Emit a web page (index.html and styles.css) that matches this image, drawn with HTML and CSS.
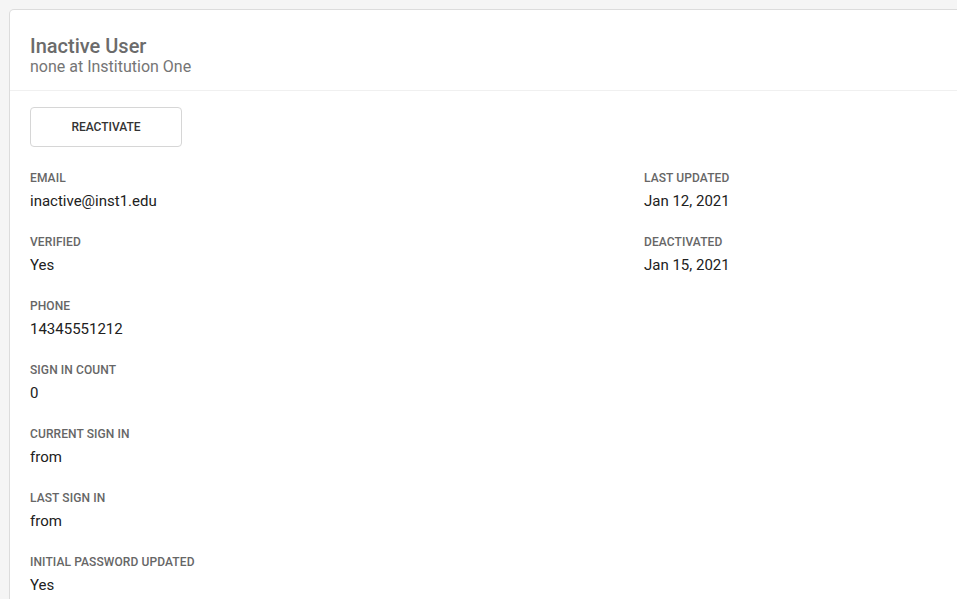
FILE: index.html
```html
<!DOCTYPE html>
<html>
<head>
<meta charset="utf-8">
<link rel="stylesheet" href="styles.css">
</head>
<body>
<div class="card">
  <div class="card-header">
    <div class="title">Inactive User</div>
    <div class="subtitle">none at Institution One</div>
  </div>
  <div class="card-body">
    <button class="btn">REACTIVATE</button>
    <div class="fields">
      <div class="col">
        <div class="field"><div class="label">Email</div><div class="value">inactive@inst1.edu</div></div>
        <div class="field"><div class="label">Verified</div><div class="value">Yes</div></div>
        <div class="field"><div class="label">Phone</div><div class="value">14345551212</div></div>
        <div class="field"><div class="label">Sign in count</div><div class="value">0</div></div>
        <div class="field"><div class="label">Current sign in</div><div class="value">from</div></div>
        <div class="field"><div class="label">Last sign in</div><div class="value">from</div></div>
        <div class="field"><div class="label">Initial password updated</div><div class="value">Yes</div></div>
      </div>
      <div class="col">
        <div class="field"><div class="label">Last updated</div><div class="value">Jan 12, 2021</div></div>
        <div class="field"><div class="label">Deactivated</div><div class="value">Jan 15, 2021</div></div>
      </div>
    </div>
  </div>
</div>
</body>
</html>
```
FILE: styles.css
```css
html, body {
  margin: 0;
  padding: 0;
  background: #f5f5f5;
  overflow: hidden;
  font-family: Roboto, "Liberation Sans", sans-serif;
}
body {
  padding: 10px;
  width: 1300px;
}
.card {
  background: #fff;
  border-radius: 4px;
  box-shadow: 0 0 0 1px #dcdcdc;
  min-height: 700px;
}
.card-header {
  padding: 25px 20px 13px;
  border-bottom: 1px solid #f0f0f0;
}
.title {
  font-size: 20px;
  line-height: 22px;
  font-weight: 500;
  color: #6b6b6b;
}
.subtitle {
  font-size: 16px;
  line-height: 20px;
  color: #757575;
}
.card-body {
  padding: 16px 20px;
}
.btn {
  display: block;
  width: 152px;
  height: 40px;
  background: #fff;
  border: 1px solid #d6d6d6;
  border-radius: 4px;
  font-family: Roboto, "Liberation Sans", sans-serif;
  font-size: 12px;
  font-weight: 500;
  color: #333;
  padding: 0;
}
.fields {
  display: grid;
  grid-template-columns: 614px 1fr;
  margin-top: 23px;
}
.field {
  margin-bottom: 23px;
}
.label {
  font-size: 12px;
  line-height: 16px;
  font-weight: 500;
  text-transform: uppercase;
  letter-spacing: 0.1px;
  color: #666;
  margin-bottom: 5px;
}
.value {
  font-size: 15px;
  line-height: 20px;
  color: #212121;
}
```
